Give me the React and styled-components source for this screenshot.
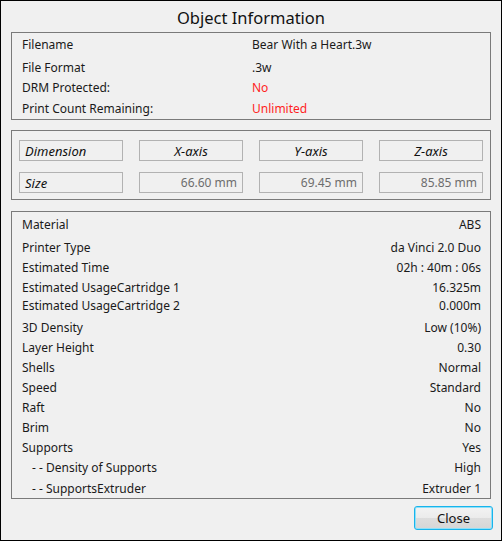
import React from 'react'
import styled, { createGlobalStyle } from 'styled-components'

const GlobalStyle = createGlobalStyle`
  html, body {
    margin:0;
    padding:0;
    background:#f0f0f0;
  }
  *{
    box-sizing:border-box;
  }
`

const fileInfo = [
  { label: 'Filename', value: 'Bear With a Heart.3w', top: 1 },
  { label: 'File Format', value: '.3w', top: 3 },
  { label: 'DRM Protected:', value: 'No', red: true, top: 0 },
  { label: 'Print Count Remaining:', value: 'Unlimited', red: true, top: 1 },
]

const axes = ['X-axis', 'Y-axis', 'Z-axis']
const sizes = ['66.60 mm', '69.45 mm', '85.85 mm']

const printInfo = [
  { label: 'Material', value: 'ABS', top: 1 },
  { label: 'Printer Type', value: 'da Vinci 2.0 Duo', top: 3 },
  { label: 'Estimated Time', value: '02h : 40m : 06s', top: 0 },
  { label: 'Estimated UsageCartridge 1', value: '16.325m', top: 0 },
  { label: 'Estimated UsageCartridge 2', value: '0.000m', top: -2 },
  { label: '3D Density', value: 'Low (10%)', top: 2 },
  { label: 'Layer Height', value: '0.30', top: 0 },
  { label: 'Shells', value: 'Normal', top: 0 },
  { label: 'Speed', value: 'Standard', top: 0 },
  { label: 'Raft', value: 'No', top: 0 },
  { label: 'Brim', value: 'No', top: 0 },
  { label: 'Supports', value: 'Yes', top: 0 },
  { label: '- - Density of Supports', value: 'High', sub: true, top: 0 },
  { label: '- - SupportsExtruder', value: 'Extruder 1', sub: true, top: 1 },
]

const App = () => {
  return (
    <>
      <GlobalStyle />
      <Window>
        <Title>Object Information</Title>

        <Section>
          {fileInfo.map((row) => (
            <InfoRow key={row.label} top={row.top}>
              <span>{row.label}</span>
              <Value red={row.red}>{row.value}</Value>
            </InfoRow>
          ))}
        </Section>

        <DimSection>
          <Field>Dimension</Field>
          {axes.map((a) => (
            <Field key={a} center>{a}</Field>
          ))}
          <Field>Size</Field>
          {sizes.map((s) => (
            <Field key={s} number>{s}</Field>
          ))}
        </DimSection>

        <PrintSection>
          {printInfo.map((row) => (
            <PrintRow key={row.label} top={row.top} sub={row.sub}>
              <span>{row.label}</span>
              <span>{row.value}</span>
            </PrintRow>
          ))}
        </PrintSection>

        <Footer>
          <CloseButton>Close</CloseButton>
        </Footer>
      </Window>
    </>
  )
}

const Window = styled.div`
  width:502px;
  height:541px;
  border:1px solid #000;
  background:#f0f0f0;
  padding:0 10px;
  display:flex;
  flex-direction:column;
  font-family:"Noto Sans", "Open Sans", sans-serif;
  font-size:12px;
  color:#1a1a1a;
`

const Title = styled.div`
  height:31px;
  display:flex;
  align-items:center;
  justify-content:center;
  font-size:16.5px;
  padding-top:2px;
  color:#111;
`

const Section = styled.div`
  border:1px solid #7a7a7a;
  padding:0 9px 1px 10px;
`

const InfoRow = styled.div`
  height:20px;
  margin-top:${props => props.top}px;
  display:grid;
  grid-template-columns:230px 1fr;
  align-items:center;
`

const Value = styled.span`
  color:${props => props.red ? '#ff1f1f' : '#1a1a1a'};
`

const DimSection = styled.div`
  margin-top:10px;
  border:1px solid #7a7a7a;
  padding:9px 7px 6px 7px;
  display:grid;
  grid-template-columns:repeat(4, 104px);
  column-gap:16px;
  row-gap:11px;
`

const Field = styled.div`
  height:21px;
  border:1px solid #b2b2b2;
  display:flex;
  align-items:center;
  padding:0 5px;
  font-style:${props => props.number ? 'normal' : 'italic'};
  font-size:${props => props.number ? '12px' : '13px'};
  justify-content:${props => props.center ? 'center' : props.number ? 'flex-end' : 'flex-start'};
  color:${props => props.number ? '#6d6d6d' : '#111'};
`

const PrintSection = styled.div`
  margin-top:11px;
  border:1px solid #7a7a7a;
  padding:1px 9px 0 10px;
`

const PrintRow = styled.div`
  height:20px;
  margin-top:${props => props.top}px;
  display:flex;
  align-items:center;
  justify-content:space-between;
  padding-left:${props => props.sub ? '10px' : '0'};
`

const Footer = styled.div`
  display:flex;
  justify-content:flex-end;
  margin-top:7px;
  margin-right:-2px;
`

const CloseButton = styled.button`
  width:79px;
  height:24px;
  border:1px solid #18b4ec;
  border-radius:3px;
  background:linear-gradient(to bottom, #f3f3f3 0%, #ebebeb 50%, #dddddd 51%, #d6d6d6 100%);
  box-shadow:inset 0 0 0 1px #8fe0f8;
  font-family:"Noto Sans", "Open Sans", sans-serif;
  font-size:13px;
  color:#111;
  padding:0;
`

export default App
